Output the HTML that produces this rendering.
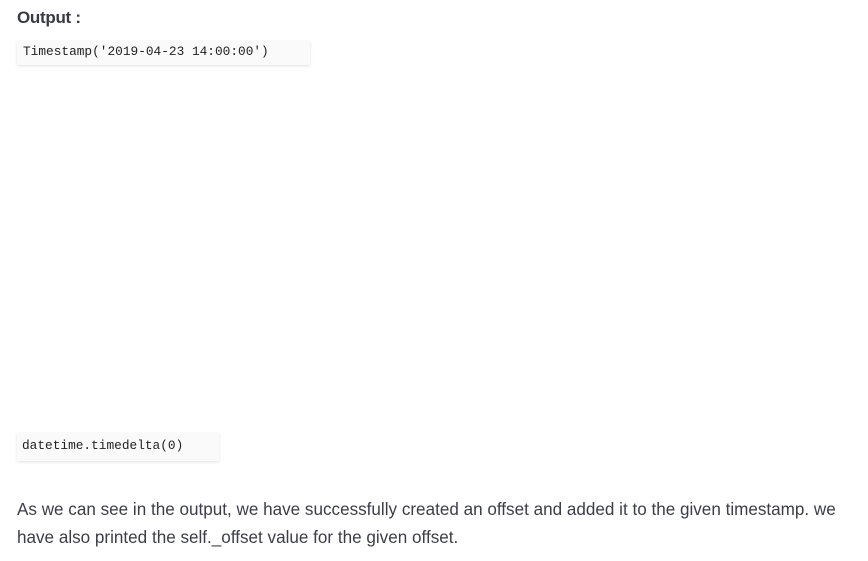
<!DOCTYPE html>
<html><head><meta charset="utf-8"><style>
body{margin:0;background:#fff;width:868px;height:561px;overflow:hidden;font-family:"Liberation Sans",sans-serif;color:#3a3a44;position:relative}
.h{position:absolute;left:17px;top:8px;font-size:17px;font-weight:bold;color:#3a3a44;letter-spacing:-0.3px}
.c{position:absolute;background:#fafafa;box-shadow:0 1px 3px rgba(0,0,0,0.12);font-family:"Liberation Mono",monospace;font-size:12.8px;color:#222;box-sizing:border-box;padding-left:6px}
.p{position:absolute;left:17px;top:496px;width:850px;white-space:nowrap;font-size:17.1px;line-height:28px;color:#3d3d48}
</style></head><body>
<div class="h">Output :</div>
<div class="c" style="left:17px;top:41px;width:293px;height:24px;line-height:22px">Timestamp('2019-04-23 14:00:00')</div>
<div class="c" style="left:17px;top:433px;width:202px;height:28px;line-height:26px;padding-left:5px">datetime.timedelta(0)</div>
<div class="p">As we can see in the output, we have successfully created an offset and added it to the given timestamp. we<br>have also printed the self._offset value for the given offset.</div>
</body></html>
